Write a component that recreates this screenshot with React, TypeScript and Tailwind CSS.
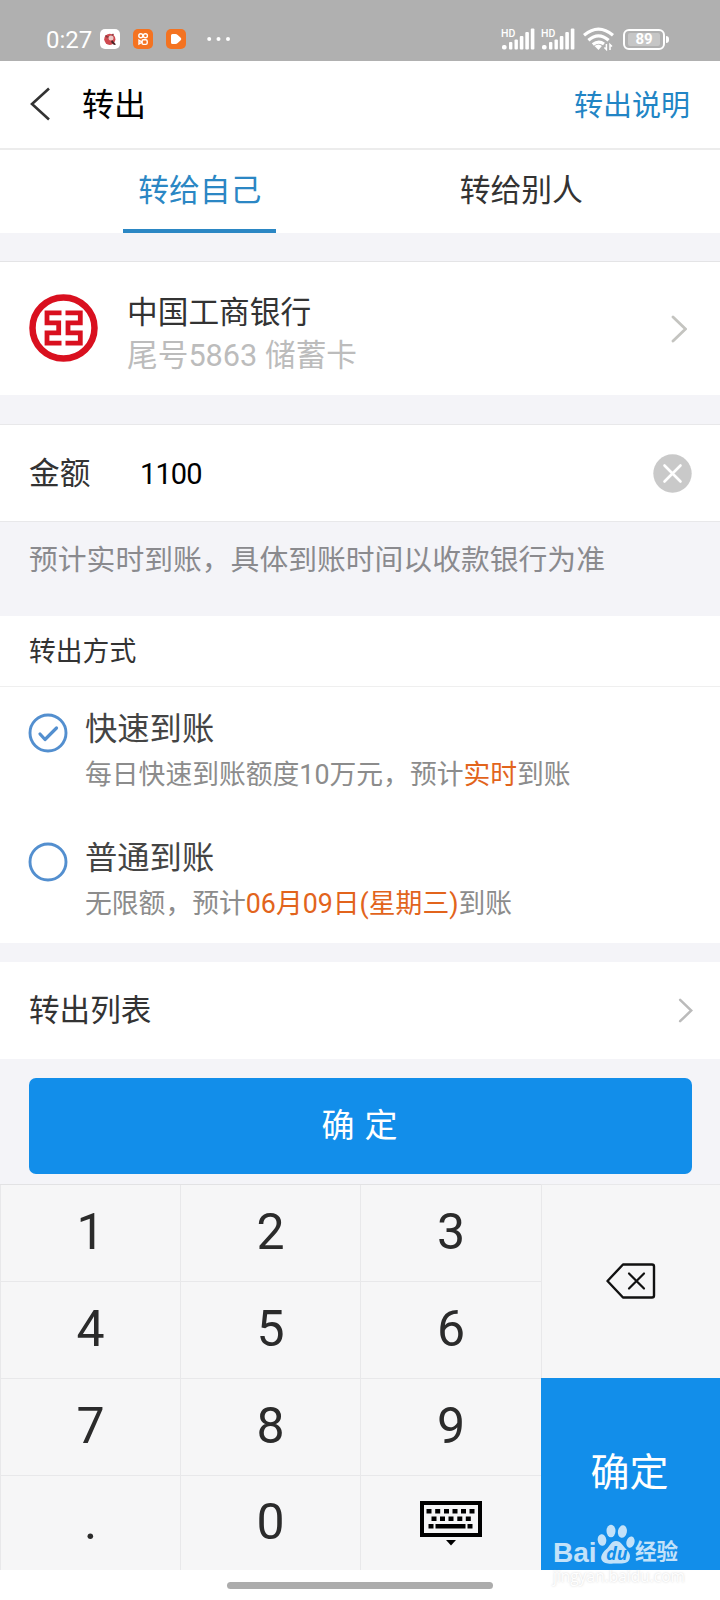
import React, { useState } from "react";
import clsx from "clsx";

type IconProps = { className?: string };

const Signal = () => (
  <svg width="34" height="24" viewBox="0 0 34 24" fill="#fff">
    <text x="0" y="9.5" fontSize="10.5" fontWeight="500" fontFamily="Roboto, sans-serif">
      HD
    </text>
    <rect x="1" y="18" width="4.6" height="4.5" rx="1.8" />
    <rect x="8" y="15" width="3.4" height="7.5" rx="1" />
    <rect x="13.5" y="12.5" width="3.4" height="10" rx="1" />
    <rect x="18.8" y="9" width="3.6" height="13.5" rx="1" />
    <rect x="24.3" y="5" width="3.6" height="17.5" rx="1" />
    <rect x="29.8" y="1.5" width="3.6" height="21" rx="1" />
  </svg>
);

const Wifi = () => (
  <svg width="31" height="24" viewBox="0 0 31 24" fill="none" stroke="#fff" strokeWidth="3.2">
    <path d="M1 8.2Q15.5-4 30 8.2" />
    <path d="M5.4 13.2Q15.5 4.6 25.6 13.2" />
    <path d="M9.8 17.6Q15.5 13 21 17" />
    <path d="M15.5 23l-4-4q4-3 7.4 0z" fill="#fff" stroke="none" />
    <path d="M23.4 17v5.5l-2-2M27 23v-5.5l2 2" strokeWidth="1.5" />
  </svg>
);

const StatusBar = () => (
  <div className="flex h-[61px] items-center bg-[#b0b0b0] pt-[17px] pl-[46px] pr-[51px] text-white">
    <span className="w-[54px] pt-[2px] text-[24px] leading-none">0:27</span>
    <svg className="mr-[13px]" width="20" height="20" viewBox="0 0 20 20">
      <rect width="20" height="20" rx="5" fill="#fff" />
      <circle cx="9.8" cy="10.3" r="5.6" fill="#cf4a50" />
      <path d="M5.5 6.5q3 4 8-1.5" stroke="#8b3a3f" strokeWidth="1.3" fill="none" />
      <circle cx="11" cy="9" r="2.5" fill="#ecc9c6" />
      <path d="M12 11l4 4.5-2 .5-3-3z" fill="#4a2224" />
    </svg>
    <svg className="mr-[13px]" width="20" height="20" viewBox="0 0 20 20">
      <rect width="20" height="20" rx="5" fill="#f47321" />
      <g fill="none" stroke="#fff" strokeWidth="1.4">
        <circle cx="7.8" cy="6.8" r="2" />
        <circle cx="12.4" cy="6.8" r="2" />
        <rect x="9" y="10.8" width="5.2" height="4.6" rx="1.4" />
        <path d="M9 13l-3-1.8v3.8z" />
      </g>
    </svg>
    <svg width="20" height="20" viewBox="0 0 20 20">
      <rect width="20" height="20" rx="5" fill="#f47321" />
      <path d="M5 6.5Q5 5 6.5 5H9.5q1.2 0 2.2 1l3 2.8q1.3 1.2 0 2.4l-3 2.8q-1 1-2.2 1h-3Q5 15 5 13.5z" fill="#fff" />
    </svg>
    <svg className="ml-[21px]" width="24" height="6" viewBox="0 0 24 6" fill="#fff">
      <circle cx="2.2" cy="3" r="2" />
      <circle cx="11.5" cy="3" r="2" />
      <circle cx="21" cy="3" r="2" />
    </svg>
    <div className="ml-auto flex items-center">
      <Signal />
      <div className="mr-[8px] ml-[6px]">
        <Signal />
      </div>
      <Wifi />
      <div className="ml-[9px] flex items-center">
        <div className="flex h-[21px] w-[42px] items-center justify-center rounded-[6px] border-[2.5px] border-white">
          <span className="flex h-[13px] w-[32px] items-center justify-center rounded-[2px] bg-[#c6c6c6] text-[15px] leading-none font-bold">
            89
          </span>
        </div>
        <div className="ml-px h-[7px] w-[3px] rounded-r-sm bg-white" />
      </div>
    </div>
  </div>
);

const ArrowRight = ({ className }: IconProps) => (
  <svg className={className} width="16" height="28" viewBox="0 0 16 28" fill="none" stroke="currentColor" strokeWidth="2.8" strokeLinecap="round">
    <path d="M2 2L14.500 14L2 26" />
  </svg>
);

const BankLogo = () => (
  <svg width="70" height="68" viewBox="0 0 70 68" fill="none" stroke="#d9101f">
    <ellipse cx="34.5" cy="34" rx="31" ry="30.5" strokeWidth="6.5" />
    <g strokeWidth="4.8">
      <path d="M32.500 18.800H18V28.900H29.700V38.800H18V49.200H32.500" />
      <path d="M36.500 18.800H51.300V28.900H39V38.800H51.300V49.200H36.500" />
    </g>
  </svg>
);

const Radio = ({ checked }: { checked: boolean }) => (
  <svg className="mt-[4px]" width="40" height="40" viewBox="0 0 40 40" fill="none" stroke="#538fcf" strokeLinecap="round" strokeLinejoin="round">
    <circle cx="20" cy="20" r="18" strokeWidth="2.9" />
    {checked && <path d="M12 21l5 5.500L28.500 15" strokeWidth="3.200" />}
  </svg>
);

const Keyboard = () => (
  <svg width="62" height="45" viewBox="0 0 62 45" fill="#000">
    <rect x="2" y="2" width="58" height="32" fill="none" stroke="#000" strokeWidth="4" />
    {[6.5, 15.2, 24, 32.5, 41, 49.5].map((x) => (
      <rect key={x} x={x} y="8" width="5" height="4.5" />
    ))}
    {[11.5, 20, 28.5, 37.3, 45.8].map((x) => (
      <rect key={x} x={x} y="15.5" width="5" height="4.5" />
    ))}
    <rect x="8.5" y="23" width="5" height="4.5" />
    <rect x="15.5" y="23" width="30" height="4.5" />
    <rect x="47.5" y="23" width="5" height="4.5" />
    <path d="M26 39h10l-5 5.5z" />
  </svg>
);

const Backspace = () => (
  <svg className="mb-[2px]" width="50" height="36" viewBox="0 0 50 36" fill="none" stroke="#111" strokeWidth="2.4" strokeLinecap="round" strokeLinejoin="round">
    <path d="M1.5 18L17 1.5H46Q48 1.500 48 3.500V32.500Q48 34.500 46 34.500H17z" />
    <path d="M23 10.500L38 25.500M38 10.500L23 25.500" strokeWidth="2.200" />
  </svg>
);

const Watermark = () => (
  <div className="absolute bottom-[-17px] left-[12px] w-[132px] text-white">
    <div className="flex items-end opacity-75">
      <span className="w-[44px] font-['Liberation_Sans'] text-[28px] leading-[24px] font-bold">Bai</span>
      <svg width="38" height="42" viewBox="0 0 38 42" fill="#fff">
        <ellipse cx="5" cy="17" rx="4.3" ry="5.8" transform="rotate(-8 5 17)" />
        <ellipse cx="14" cy="8" rx="4.5" ry="6.3" />
        <ellipse cx="25.5" cy="8.5" rx="4.5" ry="6.3" transform="rotate(10 25 8)" />
        <ellipse cx="33.5" cy="19" rx="4" ry="5.8" transform="rotate(15 33 19)" />
        <path d="M19 18c5 0 7 5 10 8s5 6 3.500 10-5 5-13.500 4.500C11 41 7 40.500 5 37.500S5 30 9 26.500 14 18 19 18z" />
        <text x="9" y="36.5" fontSize="18" fontWeight="700" fontStyle="italic" fontFamily="Open Sans, sans-serif" fill="#128eea">
          du
        </text>
      </svg>
      <span className="text-[21.500px] leading-[27px] font-bold whitespace-nowrap">经验</span>
    </div>
    <div className="h-[22px] pt-[2px] font-['Open_Sans'] text-[15.500px] leading-[18px] whitespace-nowrap opacity-55 [text-shadow:0_0_2px_#aaa]">
      jingyan.baidu.com
    </div>
  </div>
);

const keys = ["1", "2", "3", "4", "5", "6", "7", "8", "9", ".", "0"];

const options = [
  {
    title: "快速到账",
    before: "每日快速到账额度10万元，预计",
    accent: "实时",
  },
  {
    title: "普通到账",
    before: "无限额，预计",
    accent: "06月09日(星期三)",
  },
];

const App = () => {
  const [tab, setTab] = useState(0);
  const [selected, setSelected] = useState(0);

  return (
    <div className="flex h-[1600px] w-[720px] flex-col overflow-hidden bg-[#f4f4f8] font-[Roboto,'Noto_Sans_CJK_SC',sans-serif] text-[#333]">
      <StatusBar />

      <header className="flex h-[89px] items-center border-b-2 border-[#ececec] bg-white pr-[30px] pl-[30px]">
        <svg className="mb-[2px]" width="20" height="34" viewBox="0 0 20 34" fill="none" stroke="#333" strokeWidth="2.600">
          <path d="M19 1.500L2 17L19 32.500" />
        </svg>
        <h1 className="ml-[32px] text-[32px] leading-none text-black">转出</h1>
        <a className="ml-auto pt-[4px] text-[29px] leading-none text-[#2285c5]">转出说明</a>
      </header>

      <nav className="flex h-[83px] bg-white pr-[38px] pl-[39px]">
        {["转给自己", "转给别人"].map((label, i) => (
          <div key={label} className="flex flex-1 justify-center">
            <button
              onClick={() => setTab(i)}
              className={clsx(
                "w-[153px] border-b-4 pt-[3px] text-[30.800px] leading-none",
                tab === i ? "border-[#2b87c4] text-[#2b87c4]" : "border-transparent"
              )}
            >
              {label}
            </button>
          </div>
        ))}
      </nav>

      {/* Bank card */}
      <section className="mt-[28px] flex h-[134px] border-t border-[#e4e4e6] bg-white pr-[33px] pl-[29px]">
        <div className="pt-[32px]">
          <BankLogo />
        </div>
        <div className="ml-[28px] pt-[31px]">
          <p className="text-[30.700px] leading-[40px]">中国工商银行</p>
          <p className="text-[30.700px] leading-[46px] text-[#bcbcbc]">尾号5863 储蓄卡</p>
        </div>
        <ArrowRight className="mt-[53px] ml-auto text-[#c4c4c0]" />
      </section>

      {/* Amount */}
      <section className="mt-[29px] flex h-[98px] items-center border-y border-[#e8e8ea] bg-white pr-[28px] pl-[29px]">
        <span className="w-[111px] pt-[2px] text-[30.700px] leading-none">金额</span>
        <span className="pt-[2px] text-[29px] leading-none tracking-[-0.900px] text-black">1100</span>
        <svg className="ml-auto" width="39" height="39" viewBox="0 0 39 39">
          <circle cx="19.500" cy="19.500" r="19.200" fill="#c9c9c9" />
          <path d="M11.500 11.500L27.500 27.500M27.500 11.500L11.500 27.500" stroke="#fff" strokeWidth="2.600" strokeLinecap="round" />
        </svg>
      </section>
      <p className="h-[94px] pt-[18px] pl-[29px] text-[28.800px] leading-[40px] text-[#8a8a8e]">
        预计实时到账，具体到账时间以收款银行为准
      </p>

      {/* Transfer method */}
      <section className="h-[327px] bg-white">
        <h2 className="h-[71px] border-b border-[#efefef] pl-[29px] text-[26.800px] leading-[72px]">转出方式</h2>
        {options.map((item, i) => (
          <div key={item.title} className="flex h-[129px] pt-[22px] pl-[28px]" onClick={() => setSelected(i)}>
            <Radio checked={selected === i} />
            <div className="ml-[17px]">
              <p className="text-[32.300px] leading-[41px] text-[#444]">{item.title}</p>
              <p className="mt-[7px] text-[26.800px] leading-[36px] text-[#8c8c8c]">
                {item.before}
                <span className="text-[#e2641c]">{item.accent}</span>
                到账
              </p>
            </div>
          </div>
        ))}
      </section>

      <section className="mt-[19px] flex h-[97px] items-center justify-between bg-white pr-[27px] pl-[29px]">
        <span className="pt-[2px] text-[30.600px] leading-none">转出列表</span>
        <ArrowRight className="h-[25px] w-[15px] text-[#bbb]" />
      </section>

      <div className="h-[125px] px-[29px] pt-[19px]">
        <button className="h-[96px] w-[663px] rounded-[7px] bg-[#128eea] pr-[2px] pb-[2px] text-[33px] leading-none text-white [word-spacing:2px]">
          确 定
        </button>
      </div>

      {/* Keypad */}
      <div className="flex h-[386px] bg-[#f6f6f7]">
        <div className="grid w-[541px] grid-cols-[180px_180px_181px] grid-rows-[97px_97px_97px_95px] border-t border-[#e2e2e4]">
          {keys.map((key) => (
            <button key={key} className="border-b border-l border-[#e8e8ea] pb-[2px] text-[50px] leading-none text-[#2b2b2b]">
              {key}
            </button>
          ))}
          <button className="flex items-center justify-center border-l border-[#e8e8ea]">
            <Keyboard />
          </button>
        </div>
        <div className="flex w-[179px] flex-col">
          <button className="flex h-[194px] items-center justify-center border-t border-l border-[#e8e8ea]">
            <Backspace />
          </button>
          <div className="relative flex-1 bg-[#128eea]">
            <button className="h-full w-full pr-[2px] pb-[1px] text-[39px] leading-none text-white">确定</button>
            <Watermark />
          </div>
        </div>
      </div>

      <div className="flex h-[30px] justify-center bg-white pt-[12px]">
        <div className="h-[7px] w-[266px] rounded-full bg-[#acacac]" />
      </div>
    </div>
  );
};

export default App;
